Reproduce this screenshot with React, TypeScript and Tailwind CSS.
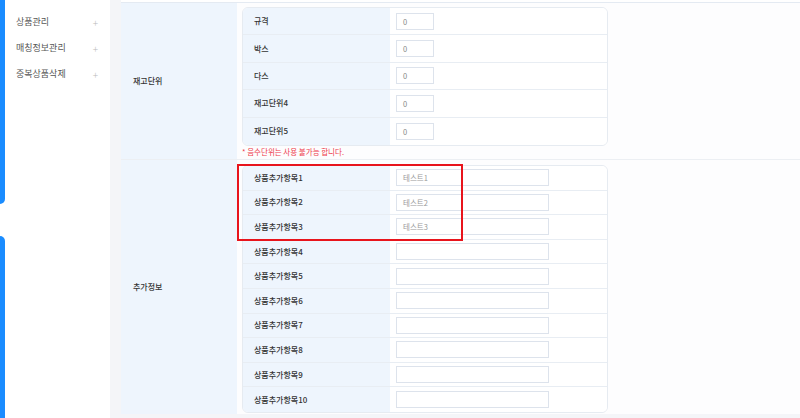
import React from 'react';

const menu = ['상품관리', '매칭정보관리', '중복상품삭제'];

const units = ['규격', '박스', '다스', '재고단위4', '재고단위5'];

const extras = [
  { label: '상품추가항목1', value: '테스트1' },
  { label: '상품추가항목2', value: '테스트2' },
  { label: '상품추가항목3', value: '테스트3' },
  { label: '상품추가항목4', value: '' },
  { label: '상품추가항목5', value: '' },
  { label: '상품추가항목6', value: '' },
  { label: '상품추가항목7', value: '' },
  { label: '상품추가항목8', value: '' },
  { label: '상품추가항목9', value: '' },
  { label: '상품추가항목10', value: '' },
];

export default function App() {
  return (
    <div
      className="relative flex h-[418px] w-[800px] overflow-hidden bg-[#f4f5f8] text-[#333]"
      style={{ fontFamily: '"Noto Sans CJK KR", "Noto Sans", sans-serif' }}
    >
      {/* === Sidebar === */}
      <aside className="flex w-[110px] shrink-0 bg-white">
        <div className="flex w-[5px] shrink-0 flex-col">
          <div className="h-[204px] rounded-br-[5px] bg-[#1a8cff]" />
          <div className="flex-1 mt-[32px] rounded-tr-[5px] bg-[#1a8cff]" />
        </div>
        <ul className="flex-1 pt-[9px]">
          {menu.map((m) => (
            <li key={m} className="flex h-[26px] items-center justify-between pl-[11px] pr-[12px] text-[9px] text-[#555]">
              <span>{m}</span>
              <span className="text-[10px] font-light text-[#bbb]">+</span>
            </li>
          ))}
        </ul>
      </aside>

      <div className="w-[11px] shrink-0" />

      {/* === Main card === */}
      <main className="flex flex-1 flex-col">
        <div className="h-[3px] border-b border-[#e4eaf2] bg-white" />

        {/* 재고단위 */}
        <div className="flex h-[157px] border-b border-[#eceff3]">
          <div className="flex w-[116px] shrink-0 items-center bg-[#eef5fd] pl-[12px] text-[8px] font-medium">
            재고단위
          </div>
          <div className="flex-1 bg-[#fdfdfe] pl-[5px] pt-[4px]">
            <div className="w-[366px] overflow-hidden rounded-[6px] border border-[#e6ebf1]">
              {units.map((u, i) => (
                <div key={u} className={`flex h-[27.4px] ${i < units.length - 1 ? 'border-b border-[#e8edf3]' : ''}`}>
                  <div className="flex w-[147px] shrink-0 items-center bg-[#eef5fd] pl-[11px] text-[8px] font-medium">
                    {u}
                  </div>
                  <div className="flex flex-1 items-center bg-white pl-[6px]">
                    <div className="flex h-[17px] w-[38px] items-center border border-[#dde3ec] pl-[6px] text-[7.5px] text-[#888]">
                      0
                    </div>
                  </div>
                </div>
              ))}
            </div>
            <p className="mt-0 text-[7.5px] text-[#ee3a4a]">* 음수단위는 사용 불가능 합니다.</p>
          </div>
        </div>

        {/* 추가정보 */}
        <div className="flex h-[254px]">
          <div className="flex w-[116px] shrink-0 items-center bg-[#eef5fd] pl-[12px] text-[8px] font-medium">
            추가정보
          </div>
          <div className="flex-1 bg-[#fdfdfe] pl-[5px] pt-[5px]">
            <div className="w-[366px] overflow-hidden rounded-[6px] border border-[#e6ebf1]">
              {extras.map((e, i) => (
                <div key={e.label} className={`flex h-[24.6px] ${i < extras.length - 1 ? 'border-b border-[#e8edf3]' : ''}`}>
                  <div className="flex w-[147px] shrink-0 items-center bg-[#eef5fd] pl-[11px] text-[8px] font-medium">
                    {e.label}
                  </div>
                  <div className="flex flex-1 items-center bg-white pl-[6px]">
                    <div className="flex h-[17px] w-[153px] items-center border border-[#dde3ec] pl-[6px] text-[7.5px] text-[#999]">
                      {e.value}
                    </div>
                  </div>
                </div>
              ))}
            </div>
          </div>
        </div>
      </main>

      {/* highlight box */}
      <div className="pointer-events-none absolute left-[237px] top-[164px] h-[77px] w-[226px] border-2 border-[#e8141c]" />
    </div>
  );
}
